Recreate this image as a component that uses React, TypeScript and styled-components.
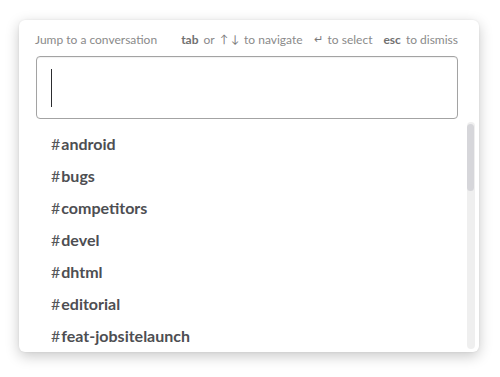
import React from "react";
import styled, { createGlobalStyle } from "styled-components";

const Global = createGlobalStyle`
  html, body { margin: 0; padding: 0; background: #ffffff; }
  body { font-family: Lato, "Open Sans", sans-serif; }
`;

const Page = styled.div`
  padding: 20px 21px 25px 19px;
  width: 500px;
  height: 377px;
  box-sizing: border-box;
`;

const Modal = styled.div`
  position: relative;
  width: 460px;
  height: 332px;
  background: #fff;
  border-radius: 6px;
  box-shadow: 0 4px 14px rgba(0, 0, 0, 0.22), 0 0 2px rgba(0, 0, 0, 0.08);
  display: flex;
  flex-direction: column;
  overflow: hidden;
`;

const Header = styled.div`
  display: flex;
  justify-content: space-between;
  align-items: center;
  padding: 11px 21px 0 16px;
  height: 16px;
  font-size: 12px;
  color: #8a8a8a;
  white-space: nowrap;
`;

const Hints = styled.div`
  display: flex;
  gap: 11px;
`;

const Hint = styled.span`
  display: inline-flex;
  gap: 5px;
`;

const Key = styled.b`
  font-weight: 700;
  color: #717171;
`;

const Arrow = styled.span`
  color: #7a7a7a;
  font-size: 11px;
`;

const InputBox = styled.div`
  margin: 9px 21px 0 17px;
  height: 61px;
  border: 1px solid #a3a3a3;
  border-radius: 4px;
  box-shadow: inset 0 1px 1px rgba(0, 0, 0, 0.06);
  display: flex;
  align-items: center;
  padding-left: 14px;
`;

const Caret = styled.span`
  width: 1px;
  height: 38px;
  background: #2c2d30;
`;

const List = styled.ul`
  list-style: none;
  margin: 0;
  padding: 8px 0 0 32px;
  flex: 1;
  overflow: hidden;
`;

const Item = styled.li`
  height: 32px;
  display: flex;
  align-items: center;
  font-size: 16px;
  font-weight: 700;
  color: #4d4e52;
`;

const Hash = styled.span`
  font-weight: 400;
  color: #555659;
  margin-right: 1px;
`;

const Track = styled.div`
  position: absolute;
  right: 4px;
  top: 102px;
  bottom: 3px;
  width: 8px;
  background-image: radial-gradient(circle, #dcdcdc 0.6px, transparent 0.8px);
  background-size: 2px 2px;
  border-radius: 4px;
`;

const Thumb = styled.div`
  position: absolute;
  top: 2px;
  left: 0;
  width: 7px;
  height: 67px;
  background: #d6d6da;
  border-radius: 4px;
`;

const channels = [
  "android",
  "bugs",
  "competitors",
  "devel",
  "dhtml",
  "editorial",
  "feat-jobsitelaunch",
];

export default function App() {
  return (
    <Page>
      <Global />
      <Modal>
        <Header>
          <span>Jump to a conversation</span>
          <Hints>
            <Hint>
              <Key>tab</Key>
              <span>or</span>
              <Arrow>↑ ↓</Arrow>
              <span>to navigate</span>
            </Hint>
            <Hint>
              <Arrow>↵</Arrow>
              <span>to select</span>
            </Hint>
            <Hint>
              <Key>esc</Key>
              <span>to dismiss</span>
            </Hint>
          </Hints>
        </Header>
        <InputBox>
          <Caret />
        </InputBox>
        <List>
          {channels.map((c) => (
            <Item key={c}>
              <Hash>#</Hash>
              {c}
            </Item>
          ))}
        </List>
        <Track>
          <Thumb />
        </Track>
      </Modal>
    </Page>
  );
}
